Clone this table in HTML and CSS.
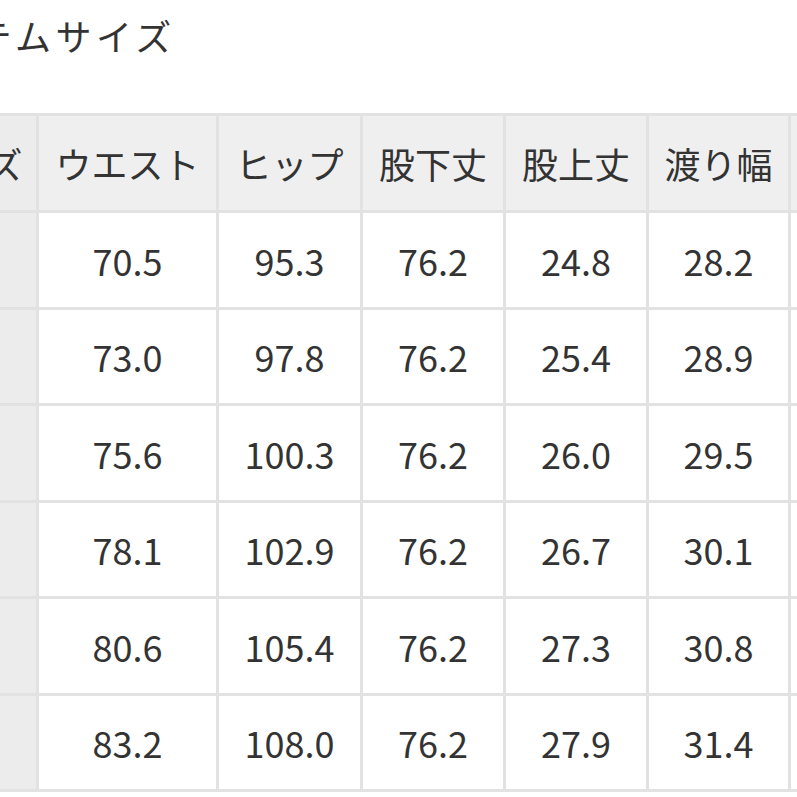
FILE: index.html
```html
<!DOCTYPE html>
<html lang="ja">
<head>
<meta charset="utf-8">
<title>アイテムサイズ</title>
<link rel="stylesheet" href="styles.css">
</head>
<body>
<div class="page">
  <h2 class="title">アイテムサイズ</h2>
  <table class="size-table">
    <colgroup>
      <col class="c-size">
      <col class="c-waist">
      <col class="c-hip">
      <col class="c-m">
      <col class="c-m">
      <col class="c-w">
      <col class="c-w">
    </colgroup>
    <thead>
      <tr>
        <th class="size">サイズ</th>
        <th>ウエスト</th>
        <th>ヒップ</th>
        <th>股下丈</th>
        <th>股上丈</th>
        <th>渡り幅</th>
        <th></th>
      </tr>
    </thead>
    <tbody>
      <tr><th class="size"></th><td>70.5</td><td>95.3</td><td>76.2</td><td>24.8</td><td>28.2</td><td></td></tr>
      <tr><th class="size"></th><td>73.0</td><td>97.8</td><td>76.2</td><td>25.4</td><td>28.9</td><td></td></tr>
      <tr><th class="size"></th><td>75.6</td><td>100.3</td><td>76.2</td><td>26.0</td><td>29.5</td><td></td></tr>
      <tr><th class="size"></th><td>78.1</td><td>102.9</td><td>76.2</td><td>26.7</td><td>30.1</td><td></td></tr>
      <tr><th class="size"></th><td>80.6</td><td>105.4</td><td>76.2</td><td>27.3</td><td>30.8</td><td></td></tr>
      <tr><th class="size"></th><td>83.2</td><td>108.0</td><td>76.2</td><td>27.9</td><td>31.4</td><td></td></tr>
    </tbody>
  </table>
</div>
</body>
</html>
```
FILE: styles.css
```css
html, body {
  margin: 0;
  padding: 0;
  background: #ffffff;
  overflow: hidden;
}
body {
  font-family: "Noto Sans CJK JP", "Noto Sans", sans-serif;
  color: #333333;
}
.page {
  width: 797px;
  height: 797px;
  overflow: hidden;
}
.title {
  margin: 11px 0 0 -103px;
  font-size: 36px;
  letter-spacing: 4.5px;
  line-height: 48px;
  font-weight: 400;
  white-space: nowrap;
}
.size-table {
  margin: 54px 0 0 -98px;
  border-collapse: separate;
  border-spacing: 0;
  table-layout: fixed;
  width: 1031px;
  border-top: 3px solid #e2e2e2;
}
.c-size { width: 137px; }
.c-waist { width: 180px; }
.c-hip { width: 144px; }
.c-m { width: 143px; }
.c-w { width: 142px; }
.size-table th,
.size-table td {
  padding: 0;
  border-right: 3px solid #e2e2e2;
  border-bottom: 3px solid #e2e2e2;
  text-align: center;
  vertical-align: middle;
  font-weight: 400;
  font-size: 36px;
  white-space: nowrap;
  overflow: hidden;
}
.size-table thead th {
  height: 94px;
  background: #efefef;
  line-height: 40px;
}
.size-table tbody td,
.size-table tbody th {
  height: 93.5px;
  line-height: 40px;
  background: #ffffff;
}
.size-table .size,
.size-table tbody .size {
  background: #ececec;
}
```
